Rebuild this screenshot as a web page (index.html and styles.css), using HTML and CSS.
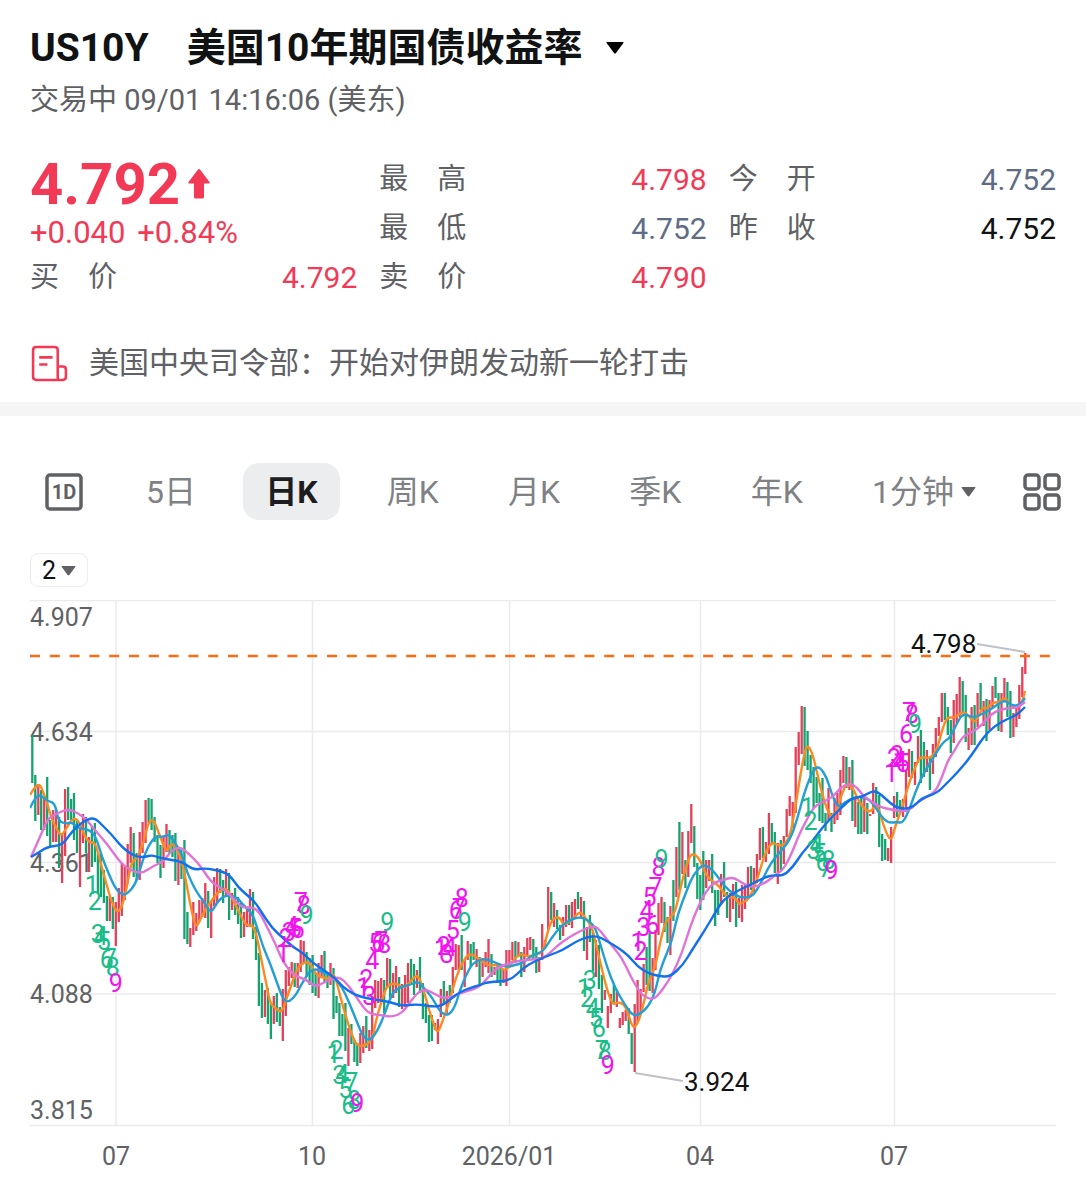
FILE: index.html
```html
<!DOCTYPE html>
<html lang="zh-CN">
<head>
    <meta charset="utf-8">
    <meta name="viewport" content="width=device-width, initial-scale=1">
    <title>US10Y 美国10年期国债收益率</title>
    <link rel="stylesheet" href="styles.css">
</head>
<body>
<header class="head">
    <h1 class="title">
        <button type="button" class="title-btn"><span>US10Y</span><span>美国10年期国债收益率</span><svg class="caret-lg" viewBox="0 0 18 12"><path d="M1 0h16q1 0 .4 1L10 11q-1 1-2 0L.6 1Q0 0 1 0z"/></svg></button>
    </h1>
    <p class="status">交易中 09/01 14:16:06 (美东)</p>
</header>

<section class="quote">
    <div class="price">
        <div class="last">4.792<svg class="arrow" viewBox="0 0 22 30"><path d="M10 .6q1-1 2 0l9.500 12.400q.8 1.500-.8 1.500H16V28q0 1.500-1.500 1.500h-7Q6 29.500 6 28V14.500H1.300q-1.600 0-.8-1.500z"/></svg></div>
        <div class="change"><span>+0.040</span> <span>+0.84%</span></div>
    </div>
    <dl class="cell"><dt>最　高</dt><dd class="up">4.798</dd></dl>
    <dl class="cell"><dt>今　开</dt><dd class="flat">4.752</dd></dl>
    <dl class="cell"><dt>最　低</dt><dd class="flat">4.752</dd></dl>
    <dl class="cell"><dt>昨　收</dt><dd>4.752</dd></dl>
    <dl class="cell"><dt>买　价</dt><dd class="up">4.792</dd></dl>
    <dl class="cell"><dt>卖　价</dt><dd class="up">4.790</dd></dl>
</section>

<a href="#" class="news">
    <svg class="news-icon" viewBox="0 0 38 36"><path d="M27 34H6q-3 0-3-3v-26Q3 2 6 2h18Q27 2 27 5V34zM27 21h5q3 0 3 3v7q0 3-3 3h-5M9 12h13M9 19h8"/></svg>
    <span>美国中央司令部：开始对伊朗发动新一轮打击</span>
</a>

<nav class="period">
    <button type="button" class="icon-btn" aria-label="分时">
        <svg class="icon" viewBox="0 0 38 38"><rect x="2" y="2" width="34" height="34" rx="3"/><text x="19" y="26">1D</text></svg>
    </button>
    <div class="tabs">
        <button type="button" class="tab">5日</button>
        <button type="button" class="tab active">日K</button>
        <button type="button" class="tab">周K</button>
        <button type="button" class="tab">月K</button>
        <button type="button" class="tab">季K</button>
        <button type="button" class="tab">年K</button>
        <button type="button" class="tab">1分钟<svg class="caret" viewBox="0 0 16 11"><path d="M1 0h14q1 0 .4 1L9 10q-1 1-2 0L.6 1Q0 0 1 0z"/></svg></button>
    </div>
    <button type="button" class="icon-btn" aria-label="更多">
        <svg class="icon" viewBox="0 0 38 38"><rect x="2" y="2" width="14" height="14" rx="3"/><rect x="22" y="2" width="14" height="14" rx="3"/><rect x="2" y="22" width="14" height="14" rx="3"/><rect x="22" y="22" width="14" height="14" rx="3"/></svg>
    </button>
</nav>

<main class="chart-box">
    <button type="button" class="count">2<svg class="caret" viewBox="0 0 16 11"><path d="M1 0h14q1 0 .4 1L9 10q-1 1-2 0L.6 1Q0 0 1 0z"/></svg></button>
    <svg class="chart" viewBox="0 0 1026 580" role="img" aria-label="日K">
        <path class="grid" d="M0 .5H1026M0 131.500H1026M0 262.500H1026M0 394H1026M0 525.500H1026M86 0V525M282.500 0V525M479.500 0V525M670.500 0V525M864.500 0V525"/>
        <g class="axis">
            <text x="0" y="26">4.907</text>
            <text x="0" y="141">4.634</text>
            <text x="0" y="272">4.361</text>
            <text x="0" y="403">4.088</text>
            <text x="0" y="519">3.815</text>
        </g>
        <g class="axis months">
            <text x="86" y="565">07</text>
            <text x="282" y="565">10</text>
            <text x="479" y="565">2026/01</text>
            <text x="670" y="565">04</text>
            <text x="864" y="565">07</text>
        </g>
        <g id="bars"></g>
        <path class="now" d="M0 56H1021"/>
        <g id="lines"></g>
        <g id="marks" class="marks"></g>
        <path class="lead" d="M947 44L995 52M605 473L653 481"/>
        <g class="peak">
            <text x="881" y="53">4.798</text>
            <text x="654" y="491">3.924</text>
        </g>
    </svg>
</main>
<script src="chart.js"></script>
</body>
</html>
```
FILE: styles.css
```css
* {margin:0; padding:0; box-sizing:border-box}
body {background:#fff; color:#111214; font:30px/1.2 Roboto, "Noto Sans CJK SC", sans-serif}
button {border:0; background:none; color:inherit; font:inherit; cursor:pointer}
a {color:inherit; text-decoration:none}

.head {padding:20px 30px 0}
.title {font-size:39px; font-weight:700; line-height:56px}
.title-btn {display:flex; align-items:center; gap:38px}
.caret-lg {width:18px; height:12px; margin-left:-14px}
.status {color:#606165; font-size:29px; line-height:48px}

.quote {display:grid; grid-template-columns:repeat(3, 1fr); grid-auto-rows:49px; column-gap:22px; padding:31px 30px 0}
.price {grid-row:span 2; color:#f23a57}
.last {display:flex; align-items:center; gap:8px; font-size:58px; font-weight:700; line-height:58px}
.arrow {width:22px; height:30px; fill:#f23a57}
.change {font-size:31px; line-height:40px}
.change span {margin-right:4px}
.cell {display:flex; justify-content:space-between; align-items:center}
.cell dt {color:#606165; font-size:29px}
.up {color:#f23a57}
.flat {color:#5f6c86}

.news {display:flex; align-items:center; gap:20px; padding:36px 30px 14px; border-bottom:14px solid #f5f5f6; color:#606165; line-height:50px}
.news-icon {width:39px; height:37px; fill:none; stroke:#f23a57; stroke-width:2.5}

.period {display:flex; align-items:center; padding:47px 25px 0 45px}
.icon-btn {display:flex}
.icon {width:38px; height:38px; fill:none; stroke:#606165; stroke-width:3.5}
.icon text {fill:#606165; stroke:none; font-size:20px; font-weight:700; text-anchor:middle}
.tabs {display:flex; flex:1; justify-content:space-between; padding:0 25px 0 41px}
.tab {display:flex; align-items:center; padding:1px 22px 0; border-radius:16px; color:#808185; font-size:32px; line-height:56px}
.tab.active {background:#ebedee; color:#1b1d20; font-weight:700}
.caret {width:15px; height:10px; margin-left:7px; fill:#606165}

.chart-box {padding:33px 30px 20px}
.count {display:flex; align-items:center; height:34px; padding:2px 11px 0; border:1px solid #ececee; border-radius:8px; font-size:25px}
.count .caret {margin-left:5px}
.chart {display:block; width:100%; margin-top:13px; font-size:26px}
.grid {fill:none; stroke:#ebebed; stroke-width:1.5}
.axis {fill:#606165; font-size:25px}
.months {text-anchor:middle}
.now {stroke:#fb6b10; stroke-width:2.5; stroke-dasharray:10 9.8}
.lead {fill:none; stroke:#bfc1c5; stroke-width:2}
.peak {fill:#111214}
.bar-r {fill:none; stroke:#e3415a; stroke-width:2.3}
.bar-g {fill:none; stroke:#14a36f; stroke-width:2.3}
.ma {fill:none; stroke-width:2.4; stroke-linejoin:round}
.ma5 {stroke:#fb8b20}
.ma10 {stroke:#229fd4}
.ma20 {stroke:#e073d8}
.ma30 {stroke:#1270ee}
.marks {font-size:25px; text-anchor:middle}
.mark-m {fill:#f014ee}
.mark-g {fill:#18bd88}
```
FILE: chart.js
```js
var NS = 'http://www.w3.org/2000/svg';
var STEP = 2.982;

// one entry a day: colour, top, bottom
var bars = [
    'g135-183 g175-221 r184-215 g190-230 r198-230 g177-236 g220-247 r210-242 r209-242 g217-268 r233-283 r189-256 g187-220 g199-220 g193-240 g220-253 r227-287 r214-243 g217-253 r237-272',
    'g227-267 g223-262 g253-293 g253-297 g270-303 g296-321 r296-321 g297-329 r302-346 r288-322 r263-316 r267-300 r244-283 r227-263 g233-277 g253-280 r232-280 r222-253 r200-243 g198-223',
    'g199-230 g217-242 g235-263 g245-278 r237-268 r224-252 g230-253 g235-257 g233-281 r250-285 g250-279 g240-339 g312-344 r328-347 r302-335 r313-331 r300-322 r298-317 r283-318 g291-328',
    'r302-338 r277-306 r268-302 g269-293 g280-303 r269-297 g273-320 r293-310 g288-315 g297-324 g303-338 r312-337 r308-327 r289-327 g292-339 g327-360 g353-406 g383-418 r390-417 g388-424',
    'g403-439 r396-424 g393-422 g407-426 r389-441 r370-416 r367-386 r362-378 g363-387 r363-388 r340-372 r341-363 g352-377 g358-385 g355-393 g373-396 r363-398 r355-377 g351-382 g373-388',
    'r363-385 g368-419 g396-413 g403-436 g414-436 g403-451 r428-466 g424-444 g440-462 g443-466 r433-463 r426-453 g416-448 r430-451 r397-449 r380-408 r381-403 r378-402 g380-413 r358-387',
    'g359-400 r373-398 r366-393 g377-407 r384-409 r375-407 r363-403 g359-383 g364-395 r370-388 g357-393 g383-419 g403-423 g415-442 g415-441 r423-430 r419-444 r389-417 g381-403 r391-413',
    'g385-403 r367-393 r344-370 r345-370 g335-370 r360-387 r341-360 g344-367 g342-360 r349-367 g357-385 r358-377 r352-367 r339-373 g354-377 r367-375 g363-383 g367-386 r370-383 r350-386',
    'r350-368 r342-360 g341-362 r342-357 g352-377 r347-372 r338-357 r337-350 g339-360 g347-373 r357-372 r324-360 r340-347 r287-330 g292-320 r303-327 g310-329 g325-340 r317-336 r305-327',
    'g305-325 r302-328 r299-318 g292-309 r297-317 g301-351 r327-360 g315-342 g332-371 r340-377 g345-389 g375-413 r390-400 r406-428 r394-413 g385-403 r390-407 r418-428 r412-425 r410-421',
    'g408-434 g433-464 r404-472 r380-422 r389-413 r364-392 g347-385 g333-391 r358-393 r330-370 r303-335 r297-323 g302-332 g317-343 r306-355 g280-321 r247-297 g222-290 r232-274 g260-288',
    'r231-277 r204-243 g226-267 g263-299 g275-310 g251-300 r260-288 r260-281 g254-293 g290-326 g290-315 r274-304 g262-297 g292-318 r293-322 r284-309 g282-327 r298-318 r285-322 r285-309',
    'r267-297 g266-290 r268-292 r254-283 r228-260 g227-258 r242-262 r213-254 g223-245 g232-273 r243-284 g240-270 r236-264 r209-237 r196-216 r202-227 r147-213 r132-165 r106-154 g107-166',
    'g131-170 g155-183 g167-208 g177-203 g193-221 g178-223 g213-231 r188-220 g213-232 r198-224 r193-220 r170-215 r156-183 g157-188 r167-190 g160-221 r198-227 g202-234 g197-234 r198-232',
    'g203-234 r214-216 r183-214 g187-207 g195-247 g234-261 g239-260 r248-261 r227-263 r196-218 g192-217 g200-213 r199-217 r170-207 r149-177 g151-178 r162-185 r136-163 g130-183 g142-177',
    'r150-172 g158-190 r144-174 r128-157 r117-136 r93-122 g93-120 g107-135 g120-153 r100-143 r94-123 r77-117 g81-113 g95-142 r128-150 r107-145 g105-145 r93-127 g83-110 r101-126',
    'g99-141 r100-130 r86-107 g77-98 g93-131 r93-132 r78-102 g82-117 g91-138 r113-137 r108-127 r85-119 r67-97 r53-74'
].join(' ').split(' ');

var averages = {
    ma5: '0,195 8,181 14,193 22,220 26,227 31,237 37,227 44,217 50,223 55,237 60,243 65,242 70,260 76,283 82,303 87,313 92,307 97,287 101,263 107,258 114,242 118,223 123,219 127,228 132,242 137,252 140,245 145,244 148,252 152,260 157,287 162,313 166,328 170,320 175,310 180,303 187,293 196,287 202,298 208,310 214,322 218,326 223,325 227,337 232,363 237,387 240,403 245,408 252,413 257,397 262,383 268,367 275,362 280,363 285,373 290,377 300,379 304,373 308,387 313,407 320,430 327,447 337,445 343,437 346,420 352,400 357,385 367,383 372,388 378,385 387,373 393,387 398,407 405,428 408,433 413,420 420,400 425,380 432,363 439,353 447,357 453,362 460,366 468,364 475,372 482,362 490,353 498,357 507,354 513,352 518,330 523,318 530,317 533,325 540,322 547,314 551,312 557,320 562,327 567,348 572,370 578,393 583,405 588,402 594,404 598,413 603,429 608,423 613,407 618,383 625,368 630,343 635,323 640,317 645,313 650,290 655,270 660,255 665,254 670,260 673,268 678,278 685,283 690,287 695,295 700,298 705,297 709,305 713,302 718,300 723,290 728,277 735,253 742,242 747,245 753,246 760,237 765,210 770,177 775,150 778,145 783,155 788,177 793,197 798,212 803,218 807,210 812,193 817,183 823,188 828,200 835,210 842,212 845,202 849,210 855,230 861,242 865,227 872,208 875,197 880,180 885,168 890,156 900,159 907,150 912,130 917,117 925,118 933,111 940,117 945,123 950,113 953,107 957,109 963,102 968,103 975,97 980,105 985,107 992,103 995,91',
    ma10: '0,208 6,196 11,195 17,201 25,203 28,220 35,224 42,222 48,228 60,230 66,237 72,257 78,272 85,288 92,295 97,294 105,285 110,270 115,253 122,240 128,236 133,237 139,234 145,243 152,254 157,273 167,293 175,303 181,314 187,302 195,295 207,297 213,305 222,313 227,327 233,347 240,363 247,383 255,404 265,397 272,383 282,368 293,372 303,376 312,387 318,400 325,417 333,437 340,441 348,430 355,413 362,393 370,387 380,385 388,381 393,387 402,397 410,412 418,416 425,407 430,390 437,373 443,363 452,359 460,360 468,364 477,367 485,365 493,363 502,355 513,352 522,337 532,325 542,319 550,317 558,320 565,327 570,343 577,367 585,388 595,405 603,416 610,414 618,407 625,393 630,370 637,353 642,340 648,313 657,290 663,275 673,264 682,269 690,280 698,290 710,298 722,297 730,285 740,264 750,252 760,240 767,220 773,197 780,177 785,168 790,167 797,178 802,195 808,208 815,202 825,197 835,197 843,203 850,215 858,223 867,222 873,223 880,208 885,193 893,174 903,158 913,142 920,138 927,123 933,113 943,118 950,115 960,110 968,104 975,100 982,106 990,105 995,98',
    ma20: '1,257 10,237 18,218 28,213 38,209 48,213 57,220 63,228 72,238 80,248 87,258 95,267 105,272 113,273 123,266 133,262 142,250 150,247 158,253 168,263 173,270 182,283 195,290 203,298 212,308 223,307 230,313 237,327 245,343 253,362 262,373 268,377 277,380 285,387 293,383 302,379 310,377 318,385 325,395 333,407 340,414 350,415 362,417 372,413 378,405 387,393 395,389 403,393 412,398 422,397 433,392 448,388 455,381 462,373 468,367 480,363 493,360 510,359 518,355 528,345 538,338 550,331 563,326 568,328 575,337 583,347 592,358 600,375 607,388 613,396 623,400 630,393 637,383 643,373 652,353 660,327 668,307 675,293 683,283 693,280 703,277 712,283 723,288 737,282 745,275 753,270 762,253 768,237 775,223 783,208 790,203 802,198 810,188 819,183 827,187 833,196 842,202 850,207 863,210 878,212 890,200 905,193 912,177 918,160 925,150 932,137 942,132 950,127 963,112 977,108 987,108 995,102',
    ma30: '1,257 8,253 17,247 32,245 38,237 47,226 58,219 65,218 73,226 82,235 90,245 98,252 107,257 115,257 122,255 130,258 142,260 153,262 163,270 175,268 195,272 202,278 208,287 217,295 225,302 232,313 242,328 253,338 263,347 273,353 283,363 295,371 305,378 313,387 323,394 335,398 348,400 360,402 372,406 387,404 405,407 413,405 422,398 430,392 440,388 450,385 458,382 480,381 493,368 505,361 520,355 533,350 545,342 557,337 567,336 575,340 587,347 598,355 608,367 618,373 628,376 640,377 653,365 662,350 675,330 685,313 693,300 705,292 720,285 733,278 743,275 753,276 763,267 772,253 782,242 792,228 802,217 812,207 822,198 832,197 842,191 848,192 857,200 865,207 875,209 883,207 892,198 907,193 915,185 925,175 932,167 938,160 947,147 953,138 963,127 977,119 987,115 995,107'
};

// runs of 1..9: first day, colour, centre of each digit
var runs = [
    [20, 'g', [285, 301, 334, 336, 341, 359, 358, 367, 383]],
    [84, 'm', [353, 338, 332, 326, 328, 329, 302, 305, 315]],
    [101, 'g', [454, 450, 475, 474, 489, 505, 482, 500, 503]],
    [111, 'm', [387, 379, 396, 360, 343, 343, 341, 344, 322]],
    [137, 'm', [349, 346, 354, 347, 330, 310, 308, 298, 322]],
    [185, 'g', [388, 398, 380, 408, 418, 428, 450, 451, 465]],
    [203, 'm', [342, 351, 327, 310, 297, 325, 287, 267, 259]],
    [260, 'g', [207, 221, 250, 244, 253, 262, 268, 260, 270]],
    [288, 'm', [173, 158, 155, 161, 163, 134, 112, 114, 124]]
];

function add(parent, tag, attrs, text) {
    var el = document.createElementNS(NS, tag);
    for (var k in attrs) el.setAttribute(k, attrs[k]);
    if (text) el.textContent = text;
    document.getElementById(parent).appendChild(el);
}

function dayX(i) {
    return (2.3 + i * STEP).toFixed(1);
}

var d = {r: '', g: ''};
bars.forEach(function (b, i) {
    var y = b.slice(1).split('-');
    d[b[0]] += 'M' + dayX(i) + ' ' + y[0] + 'V' + y[1];
});
add('bars', 'path', {'class': 'bar-r', d: d.r});
add('bars', 'path', {'class': 'bar-g', d: d.g});

// curve through the midpoints so the lines stay smooth
function smooth(str) {
    var p = str.split(' ').map(function (s) { return s.split(',').map(Number); });
    var out = 'M' + p[0];
    for (var i = 1; i < p.length - 1; i++) {
        out += 'Q' + p[i] + ' ' + (p[i][0] + p[i + 1][0]) / 2 + ',' + (p[i][1] + p[i + 1][1]) / 2;
    }
    return out + 'L' + p[p.length - 1];
}
for (var name in averages) {
    add('lines', 'path', {'class': 'ma ' + name, d: smooth(averages[name])});
}

runs.forEach(function (run) {
    run[2].forEach(function (y, n) {
        var c = run[1];
        if (n == 8) c = c == 'g' ? 'm' : 'g';
        add('marks', 'text', {'class': 'mark-' + c, x: dayX(run[0] + n), y: y + 9}, String(n + 1));
    });
});
```
